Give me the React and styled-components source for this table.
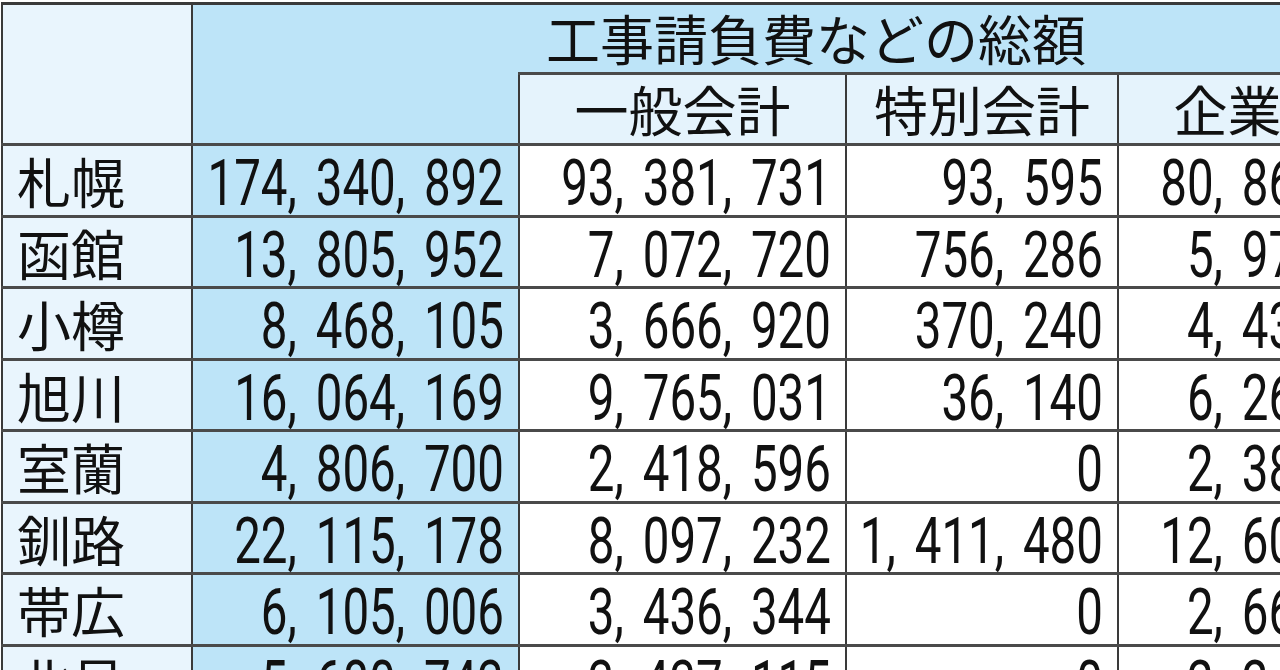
import React from 'react';
import styled, { createGlobalStyle } from 'styled-components';

const GlobalStyle = createGlobalStyle`
  html, body {
    margin: 0;
    padding: 0;
    background: #ffffff;
    overflow: hidden;
  }
  body {
    font-family: "Noto Sans CJK JP", "Noto Sans", sans-serif;
    color: #111111;
  }
`;

const LINE = '#3a3a3a';
const ROW_LINE = '#4a4a4a';

const tones = {
  label: '#e9f5fd',
  total: '#bde4f8',
  sub: '#e5f3fc',
  plain: '#ffffff',
};

const Page = styled.div`
  width: 1280px;
  height: 670px;
  overflow: hidden;
  padding: 2px 0 0 1px;
  box-sizing: border-box;
`;

const Table = styled.table`
  border-collapse: collapse;
  table-layout: fixed;
  width: 1443px;
`;

const Row = styled.tr`
  height: ${p => p.$h}px;
`;

const HeadCell = styled.th`
  background: ${p => tones[p.$tone]};
  border: 2px solid ${LINE};
  border-top-width: 3px;
  border-bottom-width: 3px;
  border-bottom-color: ${ROW_LINE};
  ${p => p.$open && 'border-left-style: hidden;'}
  padding: 0 0 0 ${p => p.$indent || 0}px;
  font-weight: 400;
  font-size: 54px;
  line-height: 1.15;
  text-align: ${p => p.$align || 'center'};
  vertical-align: middle;
  white-space: nowrap;
`;

const NameCell = styled.td`
  background: ${tones.label};
  border: 2px solid ${LINE};
  border-top: 3px solid ${ROW_LINE};
  border-bottom: 3px solid ${ROW_LINE};
  padding: 2px 0 0 14px;
  font-size: 54px;
  line-height: 1.15;
  white-space: nowrap;
  vertical-align: middle;
`;

const NumCell = styled.td`
  background: ${p => (p.$total ? tones.total : tones.plain)};
  border: 2px solid ${LINE};
  border-top: 3px solid ${ROW_LINE};
  border-bottom: 3px solid ${ROW_LINE};
  padding: 0 14px 0 0;
  text-align: right;
  vertical-align: middle;
  white-space: nowrap;
`;

const Num = styled.span`
  display: inline-block;
  font-family: Roboto, "Liberation Sans", Arial, sans-serif;
  font-size: 47.5px;
  font-weight: 400;
  word-spacing: 7px;
  line-height: 1.1;
  transform: scaleY(1.38);
  transform-origin: center;
  position: relative;
  top: 3px;
`;

const rows = [
  ['札幌', '174, 340, 892', '93, 381, 731', '93, 595', '80, 865, 566'],
  ['函館', '13, 805, 952', '7, 072, 720', '756, 286', '5, 976, 946'],
  ['小樽', '8, 468, 105', '3, 666, 920', '370, 240', '4, 430, 945'],
  ['旭川', '16, 064, 169', '9, 765, 031', '36, 140', '6, 262, 998'],
  ['室蘭', '4, 806, 700', '2, 418, 596', '0', '2, 388, 104'],
  ['釧路', '22, 115, 178', '8, 097, 232', '1, 411, 480', '12, 606, 466'],
  ['帯広', '6, 105, 006', '3, 436, 344', '0', '2, 668, 662'],
  ['北見', '5, 680, 743', '3, 437, 115', '0', '2, 243, 628'],
];

export default function App() {
  return (
    <>
      <GlobalStyle />
      <Page>
        <Table>
          <colgroup>
            <col style={{ width: 190 }} />
            <col style={{ width: 327 }} />
            <col style={{ width: 327 }} />
            <col style={{ width: 272 }} />
            <col style={{ width: 327 }} />
          </colgroup>
          <thead>
            <Row $h={70}>
              <HeadCell rowSpan={2} $tone="label" />
              <HeadCell rowSpan={2} $tone="total" />
              <HeadCell colSpan={3} $tone="total" $open $align="left" $indent={27}>
                工事請負費などの総額
              </HeadCell>
            </Row>
            <Row $h={71}>
              <HeadCell $tone="sub">一般会計</HeadCell>
              <HeadCell $tone="sub">特別会計</HeadCell>
              <HeadCell $tone="sub">企業会計</HeadCell>
            </Row>
          </thead>
          <tbody>
            {rows.map(([city, total, general, special, enterprise]) => (
              <Row key={city} $h={71.5}>
                <NameCell>{city}</NameCell>
                <NumCell $total><Num>{total}</Num></NumCell>
                <NumCell><Num>{general}</Num></NumCell>
                <NumCell><Num>{special}</Num></NumCell>
                <NumCell><Num>{enterprise}</Num></NumCell>
              </Row>
            ))}
          </tbody>
        </Table>
      </Page>
    </>
  );
}
